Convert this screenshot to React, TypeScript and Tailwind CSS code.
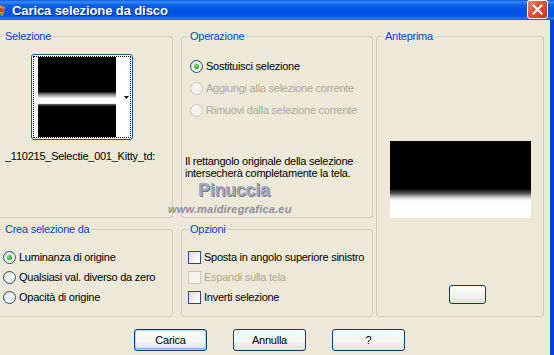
import React from "react";

const Radio = ({ checked = false, disabled = false }: { checked?: boolean; disabled?: boolean }) => (
  <span
    className={`flex h-[13px] w-[13px] shrink-0 items-center justify-center rounded-full border ${
      disabled
        ? "border-[#CAC8BB] bg-[#F4F3EE]"
        : "border-[#1C5180] bg-[linear-gradient(135deg,#DCDCD3_0%,#F6F6F3_60%,#FFFFFF_100%)]"
    }`}
  >
    {checked && (
      <span className="h-[5px] w-[5px] rounded-full bg-[radial-gradient(circle_at_40%_40%,#7BE27A_0%,#2FB52F_55%,#1A8F1A_100%)]" />
    )}
  </span>
);

const Check = ({ disabled = false }: { disabled?: boolean }) => (
  <span
    className={`h-[13px] w-[13px] shrink-0 border ${
      disabled
        ? "border-[#CAC8BB] bg-[#F4F3EE]"
        : "border-[#1C5180] bg-[linear-gradient(135deg,#DCDCD3_0%,#F6F6F3_60%,#FFFFFF_100%)]"
    }`}
  />
);

const Group = ({
  title,
  className,
  children,
}: {
  title: string;
  className: string;
  children?: React.ReactNode;
}) => (
  <fieldset className={`rounded-[3px] border border-[#D0D0BF] p-0 ${className}`}>
    <legend className="ml-[6px] px-[2px] leading-[13px] text-[#0046D5]">{title}</legend>
    {children}
  </fieldset>
);

const Button = ({ label, primary = false }: { label: string; primary?: boolean }) => (
  <button
    className={`flex h-[22px] w-[73px] items-center justify-center rounded-[3px] border border-[#003C74] bg-[linear-gradient(to_bottom,#FFFFFF_0%,#F4F4F0_60%,#E3E2DA_100%)] ${
      primary ? "shadow-[inset_0_0_0_1px_#B9D1FA,inset_0_-1px_0_1px_#89ADE4]" : ""
    }`}
  >
    {label}
  </button>
);

export default function App() {
  return (
    <div className="relative flex h-[355px] w-[554px] flex-col overflow-hidden whitespace-nowrap bg-[#ECE9D8] font-['Liberation_Sans',Arial,sans-serif] text-[11px] leading-[13px] tracking-[-0.25px] text-black">
      {/* title bar */}
      <div className="flex h-[20px] shrink-0 items-center bg-[linear-gradient(to_bottom,#0A5DE0_0%,#3A8CF6_10%,#0A5FE8_25%,#0052DE_55%,#0055E4_80%,#2478F6_92%,#0A5BE2_100%)]">
        <svg width="6" height="14" viewBox="0 0 6 14" className="ml-0 mr-[6px]">
          <path d="M0 2 L5 4 L3 13 L0 12 Z" fill="#E88A2A" />
          <path d="M0 5 L4 6 L3 9 L0 9 Z" fill="#D33B2A" />
          <path d="M0 10 L3 10 L2 13 L0 12 Z" fill="#49A648" />
        </svg>
        <span className="text-[13px] font-bold tracking-[-0.1px] text-white [text-shadow:1px_1px_0_#0A2A8A]">
          Carica selezione da disco
        </span>
        <div className="ml-auto mr-[6px] flex h-[19px] w-[21px] items-center justify-center self-start rounded-b-[3px] rounded-t-[2px] border border-white bg-[linear-gradient(135deg,#F08A6A_0%,#E0553A_40%,#C2381C_100%)]">
          <svg width="11" height="11" viewBox="0 0 11 11">
            <path d="M1.5 1.5 L9.5 9.5 M9.5 1.5 L1.5 9.5" stroke="white" strokeWidth="2" strokeLinecap="square" />
          </svg>
        </div>
      </div>

      <div className="flex min-h-0 flex-1">
        <div className="relative flex flex-1 flex-col pt-[10px]">
          <div className="flex">
            {/* left column */}
            <div className="ml-[-4px] flex w-[177px] flex-col gap-[5px]">
              <Group title="Selezione" className="h-[188px]">
                <div className="ml-[34px] mt-[11px] h-[86px] w-[102px] rounded-[3px] border border-[#1C5180] bg-white p-[1px]">
                  <div className="flex h-full border border-dotted border-black">
                    <div className="ml-[4px] h-full w-[78px] bg-[linear-gradient(to_bottom,#000_0%,#000_43%,#8a8a8a_47%,#fff_52%,#fff_58%,#666_59%,#000_62%,#000_100%)]" />
                    <div className="flex flex-1 items-center justify-end pr-[1px]">
                      <svg width="5" height="3" viewBox="0 0 5 3">
                        <path d="M0 0 H5 L2.5 3 Z" fill="black" />
                      </svg>
                    </div>
                  </div>
                </div>
                <div className="ml-[8px] mt-[10px] w-[156px] overflow-hidden">
                  _110215_Selectie_001_Kitty_td:
                </div>
              </Group>
              <Group title="Crea selezione da" className="h-[94px]">
                <div className="ml-[6px] mt-[15px] flex flex-col gap-[7px]">
                  <div className="flex items-center gap-[3px]">
                    <Radio checked />
                    <span>Luminanza di origine</span>
                  </div>
                  <div className="flex items-center gap-[3px]">
                    <Radio />
                    <span>Qualsiasi val. diverso da zero</span>
                  </div>
                  <div className="flex items-center gap-[3px]">
                    <Radio />
                    <span>Opacità di origine</span>
                  </div>
                </div>
              </Group>
            </div>

            {/* middle column */}
            <div className="ml-[8px] flex w-[192px] flex-col gap-[5px]">
              <Group title="Operazione" className="h-[188px]">
                <div className="ml-[8px] mt-[17px] flex flex-col gap-[9px]">
                  <div className="flex items-center gap-[3px]">
                    <Radio checked />
                    <span>Sostituisci selezione</span>
                  </div>
                  <div className="flex items-center gap-[3px] text-[#ACA899]">
                    <Radio disabled />
                    <span>Aggiungi alla selezione corrente</span>
                  </div>
                  <div className="flex items-center gap-[3px] text-[#ACA899]">
                    <Radio disabled />
                    <span>Rimuovi dalla selezione corrente</span>
                  </div>
                </div>
                <p className="ml-[3px] mt-[38px] leading-[12px]">
                  Il rettangolo originale della selezione
                  <br />
                  intersecherà completamente la tela.
                </p>
              </Group>
              <Group title="Opzioni" className="h-[94px]">
                <div className="ml-[6px] mt-[15px] flex flex-col gap-[7px]">
                  <div className="flex items-center gap-[3px]">
                    <Check />
                    <span>Sposta in angolo superiore sinistro</span>
                  </div>
                  <div className="flex items-center gap-[3px] text-[#ACA899]">
                    <Check disabled />
                    <span>Espandi sulla tela</span>
                  </div>
                  <div className="flex items-center gap-[3px]">
                    <Check />
                    <span>Inverti selezione</span>
                  </div>
                </div>
              </Group>
            </div>

            {/* right column */}
            <div className="ml-[3px] flex w-[168px] flex-col">
              <Group title="Anteprima" className="flex h-[287px] flex-col items-center">
                <div className="mt-[98px] h-[77px] w-[141px] bg-[linear-gradient(to_bottom,#000_0%,#000_62%,#555_68%,#ddd_74%,#fff_78%,#fff_100%)]" />
                <div className="ml-[14px] mt-[67px] h-[19px] w-[37px] rounded-[3px] border border-[#003C74] bg-[linear-gradient(to_bottom,#FFFFFF_0%,#F2F2EE_60%,#E3E2DA_100%)]" />
              </Group>
            </div>
          </div>

          {/* buttons */}
          <div className="mt-[12px] flex gap-[26px] pl-[134px]">
            <Button label="Carica" primary />
            <Button label="Annulla" />
            <Button label="?" />
          </div>

          {/* watermark */}
          <div className="pointer-events-none absolute left-[168px] top-[161px] flex flex-col tracking-normal">
            <span className="ml-[30px] text-[18px] font-bold leading-[18px] tracking-[-0.3px] text-[#A3A6BC] [text-shadow:1px_1px_0_#73768E]">
              Pinuccia
            </span>
            <span className="mt-[5px] text-[11px] font-bold italic leading-[11px] tracking-[0.2px] text-[#8E8E9C]">
              www.maidiregrafica.eu
            </span>
          </div>
        </div>
        <div className="w-[4px] shrink-0 bg-[#0840D2]" />
      </div>
    </div>
  );
}
